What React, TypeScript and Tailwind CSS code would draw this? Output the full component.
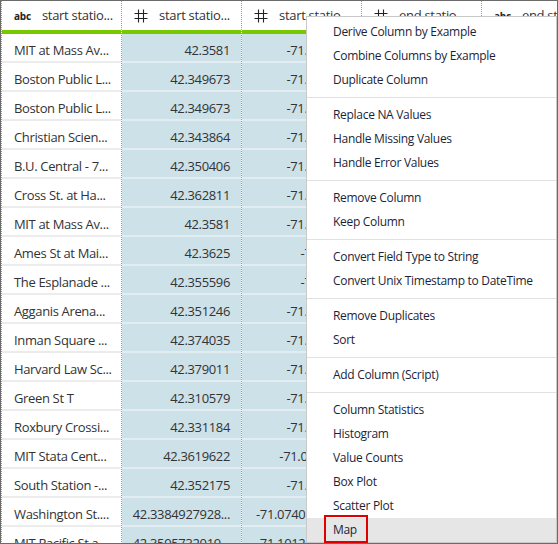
import React from 'react';

const rows = [
  ['MIT at Mass Av...', '42.3581', '-71.093198', '42.3625', 'Ames St at Main St'],
  ['Boston Public L...', '42.349673', '-71.077303', '42.355596', 'The Esplanade'],
  ['Boston Public L...', '42.349673', '-71.077303', '42.349673', 'Boston Public Library'],
  ['Christian Scien...', '42.343864', '-71.085918', '42.350406', 'B.U. Central'],
  ['B.U. Central - 7...', '42.350406', '-71.108279', '42.362811', 'Cross St. at Hanover'],
  ['Cross St. at Ha...', '42.362811', '-71.056067', '42.3581', 'MIT at Mass Ave'],
  ['MIT at Mass Av...', '42.3581', '-71.093198', '42.374035', 'Inman Square'],
  ['Ames St at Mai...', '42.3625', '-71.0882', '42.3581', 'MIT at Mass Ave'],
  ['The Esplanade ...', '42.355596', '-71.0727', '42.351246', 'Agganis Arena'],
  ['Agganis Arena...', '42.351246', '-71.115639', '42.343864', 'Christian Science'],
  ['Inman Square ...', '42.374035', '-71.101427', '42.379011', 'Harvard Law School'],
  ['Harvard Law Sc...', '42.379011', '-71.119945', '42.374035', 'Inman Square'],
  ['Green St T', '42.310579', '-71.107341', '42.331184', 'Roxbury Crossing'],
  ['Roxbury Crossi...', '42.331184', '-71.095171', '42.310579', 'Green St T'],
  ['MIT Stata Cent...', '42.3619622', '-71.0906696', '42.3581', 'MIT at Mass Ave'],
  ['South Station -...', '42.352175', '-71.055547', '42.362811', 'Cross St. at Hanover'],
  ['Washington St....', '42.3384927928...', '-71.074018377...', '42.352175', 'South Station'],
  ['MIT Pacific St a...', '42.3595732019...', '-71.101296072...', '42.3619622', 'MIT Stata Center'],
];

const menuGroups = [
  ['Derive Column by Example', 'Combine Columns by Example', 'Duplicate Column'],
  ['Replace NA Values', 'Handle Missing Values', 'Handle Error Values'],
  ['Remove Column', 'Keep Column'],
  ['Convert Field Type to String', 'Convert Unix Timestamp to DateTime'],
  ['Remove Duplicates', 'Sort'],
  ['Add Column (Script)'],
  ['Column Statistics', 'Histogram', 'Value Counts', 'Box Plot', 'Scatter Plot', 'Map'],
];

const HashIcon = () => (
  <svg width="14" height="14" viewBox="0 0 14 14" className="shrink-0">
    <path d="M4.5 0.5V13.5M9.5 0.5V13.5M0.5 4.5H13.5M0.5 9.5H13.5" stroke="#222" strokeWidth="1.1" fill="none" />
  </svg>
);

type ColProps = {
  width: string;
  type: 'text' | 'num';
  title: string;
  values: string[];
  first?: boolean;
};

const Column: React.FC<ColProps> = ({ width, type, title, values, first }) => (
  <div className={`${width} shrink-0 flex flex-col border-r border-dotted border-[#9c9c9c] ${first ? 'border-l' : ''}`}>
    <div className="h-[29px] flex items-center gap-[11px] pt-px pl-3 bg-white">
      {type === 'text' ? (
        <span className="text-[10px] font-bold text-[#222] leading-none tracking-[-0.2px]">abc</span>
      ) : (
        <HashIcon />
      )}
      <span className="text-[13px] whitespace-nowrap text-[#333] tracking-[-0.3px]">{title}</span>
    </div>
    <div className="h-1 bg-[#78c800]" />
    {values.map((v, i) => (
      <div
        key={i}
        className={`h-[29px] shrink-0 flex items-center border-b-2 pt-[6px] px-3 text-[13px] tracking-[-0.35px] whitespace-nowrap overflow-hidden ${
          type === 'text' ? 'bg-white border-[#ececec] justify-start' : 'bg-[#cde1e9] border-[#e3edf1] justify-end pr-[11px]'
        }`}
      >
        {v}
      </div>
    ))}
  </div>
);

const ContextMenu = () => (
  <div className="absolute left-[305px] top-[15px] w-[251px] bg-white border border-[#c9c9c9] pt-[3px] text-[12px] tracking-[-0.3px] text-[#1c1f3a]">
    {menuGroups.map((group, gi) => (
      <div key={gi}>
        {gi > 0 && (
          <div className="h-[11px] flex items-center">
            <div className="h-px w-full bg-[#e1e1e1]" />
          </div>
        )}
        {group.map((item) => (
          <div
            key={item}
            className={`relative h-[24px] flex items-center pl-[26px] whitespace-nowrap ${item === 'Map' ? 'bg-[#e6e6e6]' : ''}`}
          >
            {item}
            {item === 'Map' && (
              <div className="absolute left-[17px] top-[-3px] w-[44px] h-[28px] border-2 border-[#e00000]" />
            )}
          </div>
        ))}
      </div>
    ))}
  </div>
);

export default function App() {
  return (
    <div className="w-[558px] h-[544px] bg-white font-['Open_Sans',sans-serif] text-[#333]">
      <div className="relative w-full h-full overflow-hidden border border-[#6b6b6b]">
        <div className="flex w-max">
          <Column width="w-[121px]" type="text" title="start statio..." values={rows.map((r) => r[0])} first />
          <Column width="w-[120px]" type="num" title="start statio..." values={rows.map((r) => r[1])} />
          <Column width="w-[120px]" type="num" title="start statio..." values={rows.map((r) => r[2])} />
          <Column width="w-[120px]" type="num" title="end statio..." values={rows.map((r) => r[3])} />
          <Column width="w-[120px]" type="text" title="end station..." values={rows.map((r) => r[4])} />
        </div>
        <ContextMenu />
      </div>
    </div>
  );
}
